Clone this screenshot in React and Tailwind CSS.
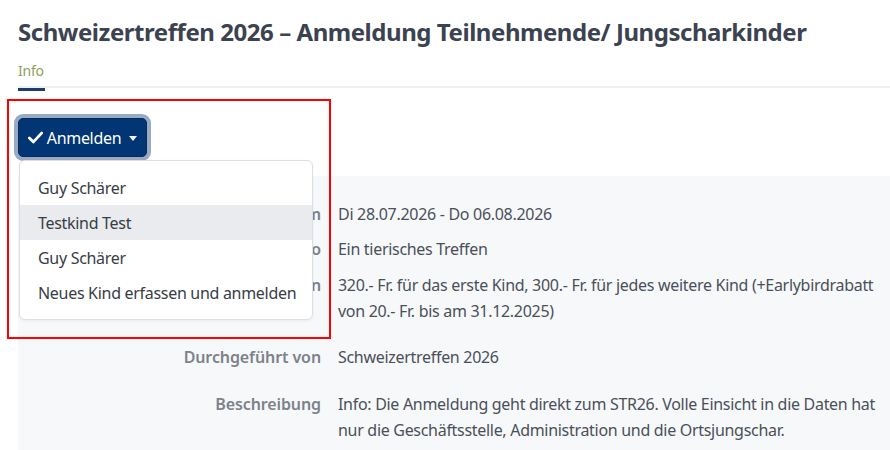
import React from "react";

const rows = [
  { label: "Datum", value: ["Di 28.07.2026 - Do 06.08.2026"], mt: "mt-0" },
  { label: "Motto", value: ["Ein tierisches Treffen"], mt: "mt-[9px]" },
  {
    label: "Kosten",
    value: [
      "320.- Fr. für das erste Kind, 300.- Fr. für jedes weitere Kind (+Earlybirdrabatt",
      "von 20.- Fr. bis am 31.12.2025)",
    ],
    mt: "mt-[10px]",
  },
  { label: "Durchgeführt von", value: ["Schweizertreffen 2026"], mt: "mt-[20px]" },
  {
    label: "Beschreibung",
    value: [
      "Info: Die Anmeldung geht direkt zum STR26. Volle Einsicht in die Daten hat",
      "nur die Geschäftsstelle, Administration und die Ortsjungschar.",
    ],
    mt: "mt-[21px]",
  },
];

const people = ["Guy Schärer", "Testkind Test", "Guy Schärer", "Neues Kind erfassen und anmelden"];

function Check() {
  return (
    <svg width="15" height="13" viewBox="0 0 16 13" className="mr-[4px]">
      <path d="M1.5 7 L5.8 11.2 L14.5 1.8" fill="none" stroke="white" strokeWidth="3" strokeLinecap="round" strokeLinejoin="round" />
    </svg>
  );
}

export default function App() {
  return (
    <div className="relative w-[890px] h-[450px] overflow-hidden bg-white font-['Noto_Sans',sans-serif]">
      <div className="pl-[18px]">
        <h1 className="pt-[15px] text-[24px] leading-[34px] font-bold text-[#3b4250] tracking-[-0.45px] whitespace-nowrap">
          Schweizertreffen 2026 – Anmeldung Teilnehmende/ Jungscharkinder
        </h1>
        <div className="mt-[9px] border-b-2 border-[#eeeff1]">
          <div className="inline-flex flex-col">
            <span className="text-[14px] leading-[18px] text-[#8da25a] tracking-[-0.2px]">Info</span>
            <span className="mt-[8px] -mb-[5px] h-[3px] w-[27px] bg-[#1e3c6e]" />
          </div>
        </div>

        <div className="relative mt-[30px]">
          <button className="flex items-center h-[39px] w-[129px] justify-center rounded-[5px] border border-[#0d2a4f] bg-[#013574] text-white text-[16px] tracking-[-0.3px] shadow-[0_0_0_4px_#97abc6]">
            <Check />
            <span>Anmelden</span>
            <span className="ml-[8px] mt-[1px] w-0 h-0 border-l-[4px] border-r-[4px] border-t-[5px] border-l-transparent border-r-transparent border-t-white" />
          </button>

          <div className="mt-[19px] bg-[#f7f8fa] pt-[25px] pb-[60px] text-[16px] leading-[26px] tracking-[-0.3px]">
            {rows.map((r) => (
              <div key={r.label} className={`flex ${r.mt}`}>
                <div className="w-[303px] shrink-0 text-right font-semibold text-[#7c828b] tracking-[-0.1px]">{r.label}</div>
                <div className="ml-[17px] text-[#4a5059] whitespace-nowrap">
                  {r.value.map((v) => (
                    <div key={v}>{v}</div>
                  ))}
                </div>
              </div>
            ))}
          </div>

          <div className="absolute left-[1px] top-[42px] w-[294px] rounded-[6px] border border-[#dcdfe3] bg-white py-[9px] shadow-[0_1px_3px_rgba(0,0,0,0.06)]">
            {people.map((p, i) => (
              <div
                key={i}
                className={`h-[35px] flex items-center pl-[18px] text-[16px] tracking-[-0.3px] text-[#383d45] ${i === 1 ? "bg-[#e9ebee]" : ""}`}
              >
                {p}
              </div>
            ))}
          </div>
        </div>
      </div>

      <div className="pointer-events-none absolute left-[7px] top-[99px] w-[324px] h-[240px] border-2 border-[#ff0000]" />
    </div>
  );
}
